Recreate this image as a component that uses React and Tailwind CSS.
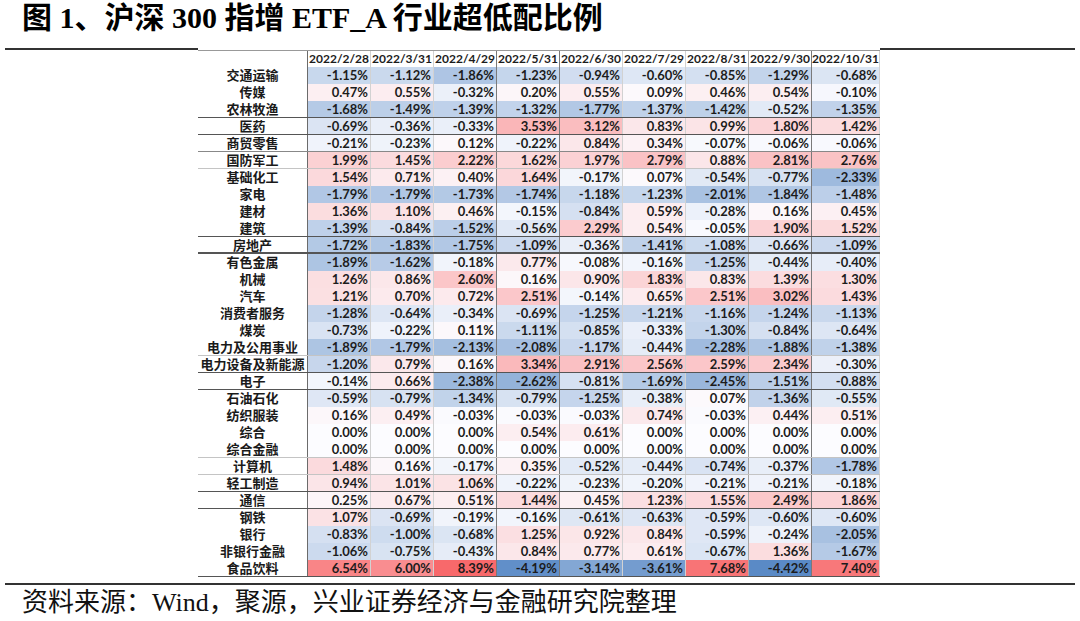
import React from 'react';

const dates = ['2022/2/28', '2022/3/31', '2022/4/29', '2022/5/31', '2022/6/30', '2022/7/29', '2022/8/31', '2022/9/30', '2022/10/31'];

const rows = [
  ['交通运输', [-1.15, -1.12, -1.86, -1.23, -0.94, -0.6, -0.85, -1.29, -0.68]],
  ['传媒', [0.47, 0.55, -0.32, 0.2, 0.55, 0.09, 0.46, 0.54, -0.1]],
  ['农林牧渔', [-1.68, -1.49, -1.39, -1.32, -1.77, -1.37, -1.42, -0.52, -1.35]],
  ['医药', [-0.69, -0.36, -0.33, 3.53, 3.12, 0.83, 0.99, 1.8, 1.42]],
  ['商贸零售', [-0.21, -0.23, 0.12, -0.22, 0.84, 0.34, -0.07, -0.06, -0.06]],
  ['国防军工', [1.99, 1.45, 2.22, 1.62, 1.97, 2.79, 0.88, 2.81, 2.76]],
  ['基础化工', [1.54, 0.71, 0.4, 1.64, -0.17, 0.07, -0.54, -0.77, -2.33]],
  ['家电', [-1.79, -1.79, -1.73, -1.74, -1.18, -1.23, -2.01, -1.84, -1.48]],
  ['建材', [1.36, 1.1, 0.46, -0.15, -0.84, 0.59, -0.28, 0.16, 0.45]],
  ['建筑', [-1.39, -0.84, -1.52, -0.56, 2.29, 0.54, -0.05, 1.9, 1.52]],
  ['房地产', [-1.72, -1.83, -1.75, -1.09, -0.36, -1.41, -1.08, -0.66, -1.09]],
  ['有色金属', [-1.89, -1.62, -0.18, 0.77, -0.08, -0.16, -1.25, -0.44, -0.4]],
  ['机械', [1.26, 0.86, 2.6, 0.16, 0.9, 1.83, 0.83, 1.39, 1.3]],
  ['汽车', [1.21, 0.7, 0.72, 2.51, -0.14, 0.65, 2.51, 3.02, 1.43]],
  ['消费者服务', [-1.28, -0.64, -0.34, -0.69, -1.25, -1.21, -1.16, -1.24, -1.13]],
  ['煤炭', [-0.73, -0.22, 0.11, -1.11, -0.85, -0.33, -1.3, -0.84, -0.64]],
  ['电力及公用事业', [-1.89, -1.79, -2.13, -2.08, -1.17, -0.44, -2.28, -1.88, -1.38]],
  ['电力设备及新能源', [-1.2, 0.79, 0.16, 3.34, 2.91, 2.56, 2.59, 2.34, -0.3]],
  ['电子', [-0.14, 0.66, -2.38, -2.62, -0.81, -1.69, -2.45, -1.51, -0.88]],
  ['石油石化', [-0.59, -0.79, -1.34, -0.79, -1.25, -0.38, 0.07, -1.36, -0.55]],
  ['纺织服装', [0.16, 0.49, -0.03, -0.03, -0.03, 0.74, -0.03, 0.44, 0.51]],
  ['综合', [0, 0, 0, 0.54, 0.61, 0, 0, 0, 0]],
  ['综合金融', [0, 0, 0, 0, 0, 0, 0, 0, 0]],
  ['计算机', [1.48, 0.16, -0.17, 0.35, -0.52, -0.44, -0.74, -0.37, -1.78]],
  ['轻工制造', [0.94, 1.01, 1.06, -0.22, -0.23, -0.2, -0.21, -0.21, -0.18]],
  ['通信', [0.25, 0.67, 0.51, 1.44, 0.45, 1.23, 1.55, 2.49, 1.86]],
  ['钢铁', [1.07, -0.69, -0.19, -0.16, -0.61, -0.63, -0.59, -0.6, -0.6]],
  ['银行', [-0.83, -1.0, -0.68, 1.25, 0.92, 0.84, -0.59, -0.24, -2.05]],
  ['非银行金融', [-1.06, -0.75, -0.43, 0.84, 0.77, 0.61, -0.67, 1.36, -1.67]],
  ['食品饮料', [6.54, 6.0, 8.39, -4.19, -3.14, -3.61, 7.68, -4.42, 7.4]],
];

// horizontal rules left over in the source sheet, by row index
const rowLines = {
  2: 'border-b border-[#555]',
  3: 'border-b border-[#555]',
  4: 'border-b border-[#888]',
  5: 'border-b border-[#c4c4c4]',
  9: 'border-b border-[#555]',
  10: 'border-b-2 border-[#555]',
  16: 'border-b border-[#c4c4c4]',
  17: 'border-b border-[#555]',
  18: 'border-b border-[#555]',
  22: 'border-b border-[#c4c4c4]',
  23: 'border-b border-[#c4c4c4]',
  24: 'border-b border-[#555]',
  25: 'border-b border-[#555]',
  29: 'border-b border-[#555]',
};

const colCls = [
  'w-[63px] border-r border-[#d2d2d2]',
  'w-[63px] border-r border-[#d2d2d2]',
  'w-[63px] border-r border-[#7a7a7a]',
  'w-[63px] border-r border-[#7a7a7a]',
  'w-[63px] border-r border-[#d2d2d2]',
  'w-[63px] border-r border-[#d2d2d2]',
  'w-[63px] border-r border-[#a8a8a8]',
  'w-[63px] border-r border-[#7a7a7a]',
  'w-[68px] border-r border-[#d2d2d2]',
];

const MIN = -4.42;
const MAX = 8.39;

function heat(v) {
  const mid = [252, 252, 255];
  const end = v < 0 ? [90, 138, 198] : [248, 105, 107];
  const t = Math.pow(v < 0 ? v / MIN : v / MAX, 0.85);
  const c = mid.map((m, i) => Math.round(m + (end[i] - m) * t));
  return `rgb(${c[0]}, ${c[1]}, ${c[2]})`;
}

function App() {
  return (
    <div className="w-[1080px] h-[621px] bg-white overflow-hidden">
      <div className="h-[48px] pl-[22px]">
        <h1 className="text-[30px] leading-[36px] font-bold text-black font-['Liberation_Serif','Noto_Sans_CJK_SC',serif]">
          图 1、沪深 300 指增 ETF_A 行业超低配比例
        </h1>
      </div>

      <div className="flex h-[2px]">
        <div className="ml-[5px] w-[193px] bg-[#333]" />
        <div className="w-[682px]" />
        <div className="w-[195px] bg-[#333]" />
      </div>

      <div className="ml-[198px] w-[682px] font-['Lato','Noto_Sans_CJK_SC',sans-serif] font-bold text-[#1c1c1c]">
        <div className="flex h-[17px] border-t border-[#999] text-[12px] leading-[16px]">
          <div className="w-[110px] border-r border-[#6b6b6b]" />
          {dates.map((d, i) => (
            <div key={d} className={`${colCls[i]} text-center bg-white whitespace-nowrap`}>{d}</div>
          ))}
        </div>

        {rows.map(([name, vals], r) => (
          <div key={name} className={`flex h-[17px] ${rowLines[r] || ''}`}>
            <div className="w-[110px] border-r border-[#6b6b6b] text-center text-[13px] leading-[16px] text-[#1a1a1a] whitespace-nowrap">
              {name}
            </div>
            {vals.map((v, i) => (
              <div
                key={i}
                className={`${colCls[i]} text-right pr-[2px] text-[13px] leading-[16px]`}
                style={{ backgroundColor: heat(v) }}
              >
                {v.toFixed(2)}%
              </div>
            ))}
          </div>
        ))}
      </div>

      <div className="mt-[6px] mx-[5px] h-[2px] bg-[#333]" />

      <div className="pl-[22px] text-[26px] leading-[36px] text-[#111] font-['Liberation_Serif','Noto_Sans_CJK_SC',serif]">
        资料来源：Wind，聚源，兴业证券经济与金融研究院整理
      </div>
    </div>
  );
}

export default App;
